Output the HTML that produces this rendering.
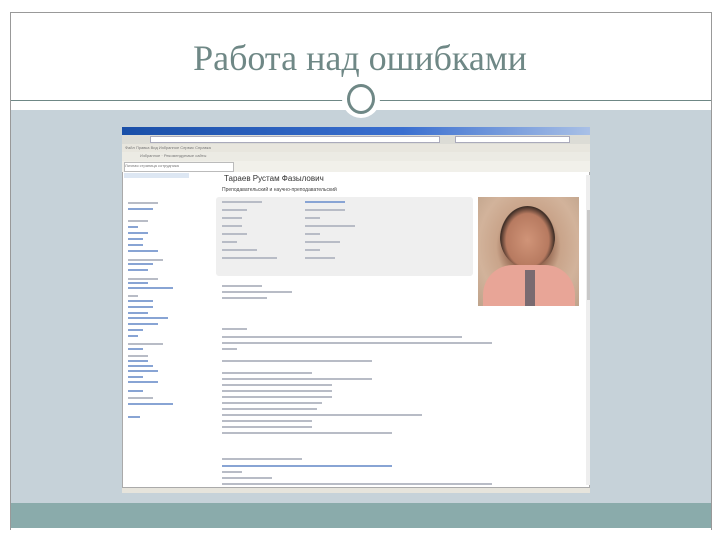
<!DOCTYPE html><html><head><meta charset="utf-8"><style>
body{margin:0;width:720px;height:540px;background:#fff;position:relative;overflow:hidden;font-family:"Liberation Sans",sans-serif}
div{position:absolute;box-sizing:border-box}
.t{font-size:4px;color:#777;white-space:nowrap}
.l{height:2px;background:#b8bcc6;}
.lk{height:2px;background:#88a4d4}
</style></head><body>
<div style="left:10px;top:12px;width:702px;height:518px;border:1px solid #999;border-bottom:none"></div>
<div style="left:0;top:0;width:720px;height:100px;text-align:center;font-family:'Liberation Serif',serif;font-size:36px;color:#6f8886;line-height:34px;padding-top:41px">Работа над ошибками</div>
<div style="left:11px;top:100px;width:700px;height:1px;background:#6f8886"></div>
<div style="left:11px;top:110px;width:700px;height:393px;background:#c6d2d9"></div>
<div style="left:11px;top:503px;width:700px;height:25px;background:#8aabab"></div>
<div style="left:342px;top:80px;width:38px;height:38px;border-radius:50%;background:#fff"></div>
<div style="left:347px;top:84px;width:28px;height:30px;border-radius:50%;border:3px solid #6f8886"></div>
<div style="left:122px;top:127px;width:468px;height:366px;background:#fff;border:1px solid #aaa"></div>
<div style="left:122px;top:127px;width:468px;height:8px;background:linear-gradient(90deg,#1a4fa8,#3a6fd0 60%,#a9c0e6)"></div>
<div style="left:122px;top:135px;width:468px;height:9px;background:#dcdcd6"></div>
<div style="left:150px;top:136px;width:290px;height:7px;background:#fff;border:1px solid #aab"></div>
<div style="left:455px;top:136px;width:115px;height:7px;background:#fff;border:1px solid #aab"></div>
<div style="left:122px;top:144px;width:468px;height:8px;background:#e8e6de"></div>
<div style="left:122px;top:152px;width:468px;height:9px;background:#ecebe4"></div>
<div style="left:122px;top:161px;width:468px;height:11px;background:#f1f0ea"></div>
<div style="left:124px;top:162px;width:110px;height:10px;background:#fff;border:1px solid #bbb"></div>
<div class="t" style="left:125px;top:145px">Файл Правка Вид Избранное Сервис Справка</div>
<div class="t" style="left:140px;top:153px">Избранное · Рекомендуемые сайты</div>
<div class="t" style="left:125px;top:163px">Личная страница сотрудника</div>
<div style="left:122px;top:487px;width:468px;height:6px;background:#e6e4dc;border-top:1px solid #aaa"></div>
<div style="left:124px;top:173px;width:65px;height:5px;background:#dde7f3"></div>
<div style="left:224px;top:174px;font-size:8px;color:#333;white-space:nowrap">Тараев Рустам Фазылович</div>
<div style="left:222px;top:187px;font-size:5px;color:#444;white-space:nowrap">Преподавательский и научно-преподавательский</div>
<div style="left:216px;top:197px;width:257px;height:79px;background:#efefef;border-radius:3px"></div>
<div style="left:478px;top:197px;width:101px;height:109px;background:radial-gradient(ellipse at 50% 45%,#a7705a 0,#8a5a44 25%,#c9a48a 45%,#d2b39b 70%,#bfa38b 100%)"></div>
<div style="left:500px;top:206px;width:55px;height:62px;border-radius:50%;background:radial-gradient(ellipse at 50% 55%,#d09478 0,#b77a60 55%,#3a2b24 70%,transparent 72%)"></div>
<div style="left:483px;top:265px;width:92px;height:41px;border-radius:30px 30px 0 0;background:#e8a597"></div>
<div style="left:525px;top:270px;width:10px;height:36px;background:#7a6a70"></div>
<div style="left:586px;top:175px;width:4px;height:310px;background:#eee"></div>
<div style="left:587px;top:210px;width:3px;height:90px;background:#c8c8c8"></div>
<div id="lines"></div>
<script>
var h='';
function L(x,y,w,c){h+='<div class="'+c+'" style="left:'+x+'px;top:'+y+'px;width:'+w+'px"></div>';}
var rows=[[201,'l',40,'lk',40],[209,'l',25,'l',40],[217,'l',20,'l',15],[225,'l',20,'l',50],[233,'l',25,'l',15],[241,'l',15,'l',35],[249,'l',35,'l',15],[257,'l',55,'l',30]];
rows.forEach(function(r){L(222,r[0],r[2],r[1]);L(305,r[0],r[4],r[3]);});
[[285,40],[291,70],[297,45]].forEach(function(r){L(222,r[0],r[1],'l');});
L(222,328,25,'l');L(222,336,240,'l');L(222,342,270,'l');L(222,348,15,'l');L(222,360,150,'l');L(222,372,90,'l');
[[378,150],[384,110],[390,110],[396,110],[402,100],[408,95],[414,200],[420,90],[426,90],[432,170]].forEach(function(r){L(222,r[0],r[1],'l');});
L(222,458,80,'l');L(222,465,170,'lk');L(222,471,20,'l');L(222,477,50,'l');L(222,483,270,'l');
var s=[[190,30,'l'],[196,25,'lk'],[208,20,'l'],[214,10,'lk'],[220,20,'lk'],[226,15,'lk'],[232,15,'lk'],[238,30,'lk'],[247,35,'l'],[251,25,'lk'],[257,20,'lk'],[266,30,'l'],[270,20,'lk'],[275,45,'lk'],[283,10,'l'],[288,25,'lk'],[294,25,'lk'],[300,20,'lk'],[305,40,'lk'],[311,30,'lk'],[317,15,'lk'],[323,10,'lk'],[331,35,'l'],[336,15,'lk'],[343,20,'l'],[348,20,'lk'],[353,25,'lk'],[358,30,'lk'],[364,15,'lk'],[369,30,'lk'],[378,15,'lk'],[385,25,'l'],[391,45,'lk'],[404,12,'lk']];
s.forEach(function(r){L(128,r[0]+12,r[1],r[2]);});
document.getElementById('lines').outerHTML=h;
</script>
</body></html>
